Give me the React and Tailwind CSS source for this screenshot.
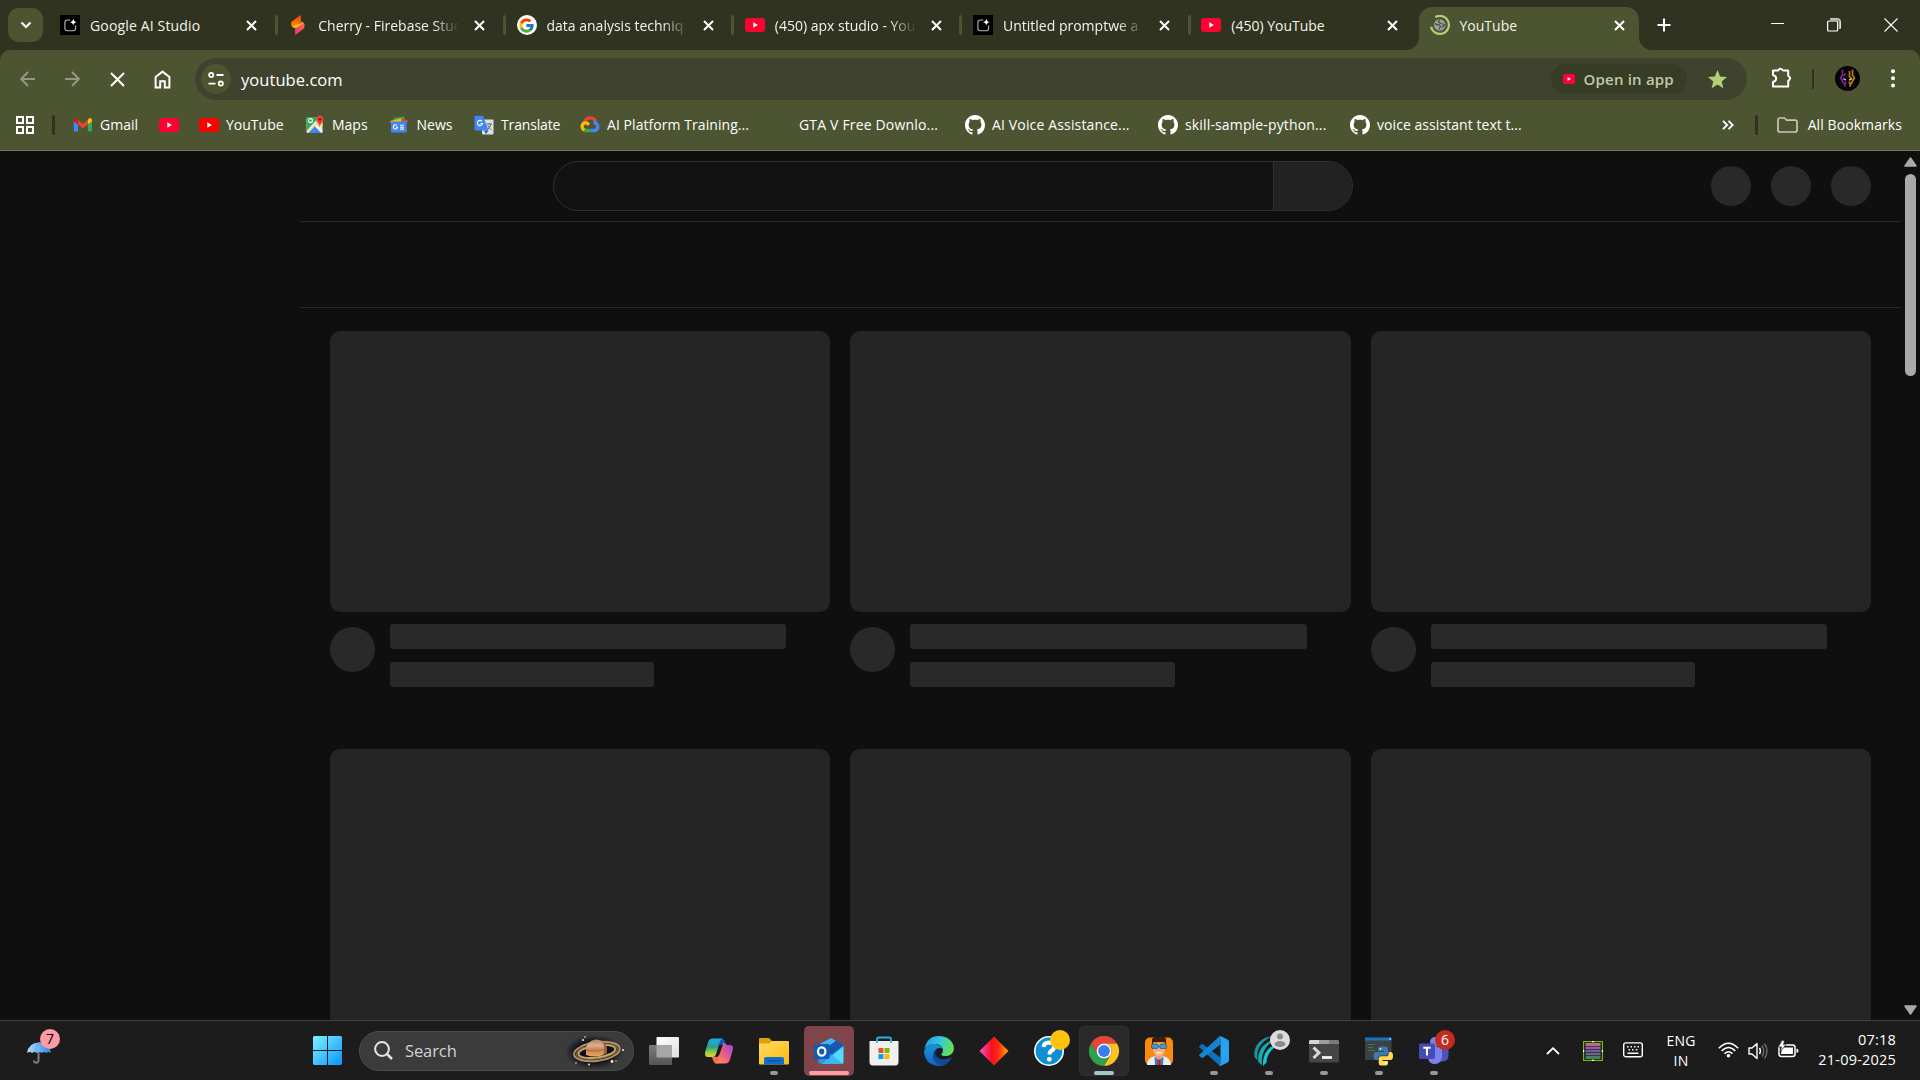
import React from "react";
import { FcGoogle } from "react-icons/fc";

const UI = "font-['Open_Sans','Noto_Sans',sans-serif]";

/* ---------- small icons ---------- */

const Cross = ({ s = 11, w = 2 }) => (
  <svg width={s} height={s} viewBox={`0 0 ${s} ${s}`} className="shrink-0">
    <path d={`M1 1L${s - 1} ${s - 1}M${s - 1} 1L1 ${s - 1}`} stroke="#fff" strokeWidth={w} />
  </svg>
);

const AiStudio = () => (
  <svg width="20" height="20" viewBox="0 0 20 20">
    <rect width="20" height="20" fill="#000" />
    <path d="M10.2 5H7.4Q4.9 5 4.9 7.500V13.300Q4.900 15.700 7.400 15.700H13.200Q15.600 15.700 15.600 13.300V10.600" fill="none" stroke="#b9b9b9" strokeWidth="1.100" />
    <path d="M13.300 3.800Q13.700 6.800 16.700 7.200Q13.700 7.600 13.300 10.600Q12.900 7.600 9.900 7.200Q12.900 6.800 13.300 3.800Z" fill="#fff" />
  </svg>
);

const FirebaseStudio = () => (
  <svg width="20" height="20" viewBox="0 0 20 20">
    <defs>
      <linearGradient id="fsA" x1="0" y1="0" x2="0" y2="1">
        <stop offset="0" stopColor="#ff3d00" />
        <stop offset="1" stopColor="#ff9100" />
      </linearGradient>
      <linearGradient id="fsB" x1="1" y1="0" x2="0" y2="1">
        <stop offset="0" stopColor="#ff7a2e" />
        <stop offset="1" stopColor="#e91ea0" />
      </linearGradient>
    </defs>
    <path d="M12.200 0.300L3.600 6.800Q2.200 9.600 4.600 12.200L12.800 7V1Q12.800 0.200 12.200 0.300Z" fill="url(#fsA)" />
    <path d="M4.600 12.200L14.200 6.600Q17.800 9 16 13.200L7.800 19.700Q7 20 7 19V13.800L10 11.600Z" fill="url(#fsB)" />
    <path d="M4.200 11.600L10.200 8.800L15 8.200L9 12.400Q6 13.800 4.200 11.600Z" fill="#ffc400" />
  </svg>
);

const GoogleG = () => (
  <span className="flex h-5 w-5 items-center justify-center rounded-full bg-white">
    <FcGoogle size={17} />
  </span>
);

const YouTube = ({ color = "#ff0033" }) => (
  <svg width="20" height="20" viewBox="0 0 20 20">
    <rect y="3" width="20" height="14" rx="3" fill={color} />
    <path d="M8.300 7.300L12.900 10L8.300 12.700Z" fill="#fff" />
  </svg>
);

const Loading = () => (
  <svg width="20" height="20" viewBox="0 0 20 20">
    <path d="M4.200 2.900A9 9 0 1 1 1.400 13" fill="none" stroke="#b5cf78" strokeWidth="2.200" transform="rotate(8 10 10)" />
    <circle cx="9.700" cy="10" r="5.800" fill="#9aa0a6" />
    <path d="M5 8.500Q7 10.500 9 9.500L10.500 11.500L9 14.500M9.500 4.500L8.500 7L11 8.500L14.500 9.500L12 12.500" fill="none" stroke="#4c5431" strokeWidth="1.300" />
  </svg>
);

const Gmail = () => (
  <svg width="20" height="20" viewBox="0 0 20 20">
    <path d="M0.800 6V15.500Q0.800 16.500 1.800 16.500H5V8.500Z" fill="#4285f4" />
    <path d="M14.800 8.500V16.500H18Q19 16.500 19 15.500V6Z" fill="#34a853" />
    <path d="M5 5L9.900 8.800L14.800 5V9.600L9.900 13.300L5 9.600Z" fill="#ea4335" />
    <path d="M0.800 5.200Q0.800 3 2.800 3Q3.500 3 5 4.500V9.600L0.800 6.500Z" fill="#c5221f" />
    <path d="M19 5.200Q19 3 17 3Q16.300 3 14.800 4.500V9.600L19 6.500Z" fill="#fbbc04" />
  </svg>
);

const Maps = () => (
  <svg width="20" height="20" viewBox="0 0 20 20">
    <rect x="1.500" y="2" width="16" height="16" rx="1.500" fill="#e8eaed" />
    <path d="M1.500 17V3.500Q1.500 2 3 2H14L1.500 16Z" fill="#34a853" />
    <path d="M2 17.800L13 6.500L17.500 9V11L10 10.500L3.500 18Z" fill="#fdd663" />
    <path d="M3.500 18L9.800 11.200L16.500 18Z" fill="#4285f4" />
    <path d="M11.500 10L17.500 16V17L16.500 18L10 11.500Z" fill="#f1f3f4" />
    <circle cx="5.500" cy="5.600" r="2" fill="none" stroke="#fff" strokeWidth="1.100" />
    <path d="M14.700 12.500Q14.500 9.500 12.500 7.500Q10.800 5.500 11.200 3.500Q12 .500 14.900 .500Q18 .700 18.500 3.800Q18.700 5.500 17 7.500Q15 9.500 14.700 12.500Z" fill="#ea4335" />
    <circle cx="14.900" cy="4.300" r="1.400" fill="#8e1b12" />
  </svg>
);

const News = () => (
  <svg width="20" height="20" viewBox="0 0 20 20">
    <path d="M4.500 3L15 1.600L16 6H4Z" fill="#34a853" />
    <path d="M1 6L12 3.500L13 8H2Z" fill="#fbbc04" />
    <path d="M13 4L19 5.500L17.500 9H12Z" fill="#ea4335" />
    <rect x="2" y="6.500" width="15.700" height="11" rx="1" fill="#4285f4" />
    <path d="M8 10.500A2.100 2.100 0 1 0 8.500 12.200H6.800M11 10.200H15M11 12.200H15M11 14.100H15" fill="none" stroke="#fff" strokeWidth="1.100" />
  </svg>
);

const Translate = () => (
  <svg width="20" height="20" viewBox="0 0 20 20">
    <rect x="8" y="4.500" width="11.500" height="15" rx="1" fill="#dcdfe3" />
    <path d="M1.500 .800H9L14.500 15.500H2Q.500 15.500 .500 14V2Q.500 .800 1.500 .800Z" fill="#4285f4" />
    <path d="M10 15.500H14.500L12 19Z" fill="#2a56c6" />
    <path d="M8 6.300A2.600 2.600 0 1 0 8.600 8.500H6.300" fill="none" stroke="#fff" strokeWidth="1.200" />
    <path d="M12.500 9H18M15.200 8V9M17 9Q16 13 13.500 14.500M13.800 10.500Q15 13 17.500 15" fill="none" stroke="#5f6368" strokeWidth="1" />
  </svg>
);

const Cloud = () => (
  <svg width="20" height="20" viewBox="0 0 20 20">
    <path d="M4.500 6.500Q6.500 2.600 10.500 2.800Q14.500 3 15.800 7" fill="none" stroke="#ea4335" strokeWidth="3.300" />
    <path d="M13.500 7.200Q17.800 8 17.800 12Q17.500 15.500 14 15.600H10.500" fill="none" stroke="#4285f4" strokeWidth="3.500" />
    <path d="M10.500 15.600H6Q4.500 15.600 3.500 14.900" fill="none" stroke="#34a853" strokeWidth="3.500" />
    <path d="M4.200 15.200Q1 12.500 2.600 9.500Q4.500 7 7.200 8.200L9 9.800" fill="none" stroke="#fbbc04" strokeWidth="3.300" />
  </svg>
);

const Github = () => (
  <svg width="20" height="20" viewBox="0 0 16 16" fill="#fff">
    <path d="M8 0C3.58 0 0 3.58 0 8c0 3.54 2.29 6.53 5.47 7.59.4.07.55-.17.55-.38 0-.19-.01-.82-.01-1.49-2.01.37-2.53-.49-2.69-.94-.09-.23-.48-.94-.82-1.13-.28-.15-.68-.52-.01-.53.63-.01 1.08.58 1.23.82.72 1.21 1.87.87 2.33.66.07-.52.28-.87.51-1.07-1.78-.2-3.64-.89-3.64-3.95 0-.87.31-1.59.82-2.15-.08-.2-.36-1.02.08-2.12 0 0 .67-.21 2.2.82.64-.18 1.32-.27 2-.27.68 0 1.36.09 2 .27 1.53-1.04 2.2-.82 2.2-.82.44 1.1.16 1.92.08 2.12.51.56.82 1.27.82 2.15 0 3.07-1.87 3.75-3.65 3.95.29.25.54.73.54 1.48 0 1.07-.01 1.93-.01 2.2 0 .21.15.46.55.38A8.013 8.013 0 0016 8c0-4.42-3.58-8-8-8z" />
  </svg>
);

/* ---------- browser chrome ---------- */

const tabs = [
  { icon: <AiStudio />, title: "Google AI Studio", t: "tracking-[0.15px]" },
  { icon: <FirebaseStudio />, title: "Cherry - Firebase Stud", fade: true },
  { icon: <GoogleG />, title: "data analysis techniq", fade: true },
  { icon: <YouTube />, title: "(450) apx studio - You", fade: true },
  { icon: <AiStudio />, title: "Untitled promptwe a", fade: true },
  { icon: <YouTube />, title: "(450) YouTube", last: true },
  { icon: <Loading />, title: "YouTube", active: true },
];

function Tab({ icon, title, fade, last, active, t = "" }) {
  return (
    <div className="relative flex h-[50px] w-[228.250px] shrink-0 items-center pl-3">
      {active && (
        <div className="absolute top-[7px] bottom-0 left-px w-[220px] rounded-t-[13px] bg-[#4c5431]">
          <svg className="absolute bottom-0 -left-[13px]" width="13" height="13"><path d="M13 0V13H0A13 13 0 0 0 13 0Z" fill="#4c5431" /></svg>
          <svg className="absolute -right-[13px] bottom-0" width="13" height="13"><path d="M0 0V13H13A13 13 0 0 1 0 0Z" fill="#4c5431" /></svg>
        </div>
      )}
      <span className="relative flex h-5 w-5 shrink-0">{icon}</span>
      <span
        className={
          "relative mt-px ml-[10px] w-[144px] shrink-0 text-[14px] leading-5 whitespace-nowrap text-[#f2f3ea] " + t +
          (fade ? " [mask-image:linear-gradient(to_right,#000_80%,transparent_98%)]" : "")
        }
      >
        {title}
      </span>
      <span className={"relative flex " + (active ? "ml-[10px]" : "ml-3")}><Cross s={11} w={2} /></span>
      {!active && !last && <span className="ml-[17.500px] h-5 w-[3px] shrink-0 rounded-full bg-[#4c5431]" />}
    </div>
  );
}

function TabStrip() {
  return (
    <div className="flex h-[50px] shrink-0 items-center bg-[#303320]">
      <div className="ml-2 flex h-[34px] w-[35px] shrink-0 items-center justify-center rounded-[11px] bg-[#4c5431]">
        <svg width="12" height="8" viewBox="0 0 12 8"><path d="M1.500 1.500L6 6L10.500 1.500" fill="none" stroke="#fff" strokeWidth="2.200" /></svg>
      </div>
      <div className="ml-[5px] flex shrink-0">
        {tabs.map((t, i) => <Tab key={i} {...t} />)}
      </div>
      <svg className="ml-[11px] shrink-0" width="14" height="14"><path d="M7 .500V13.500M.500 7H13.500" stroke="#fff" strokeWidth="2" /></svg>
      <div className="mr-[22px] ml-auto flex items-center gap-[43px]">
        <svg width="13" height="14"><path d="M0 5.500H13" stroke="#fff" /></svg>
        <svg width="14" height="14" fill="none">
          <path d="M3.500 1.700H10.500Q12.600 1.700 12.600 3.800V11" stroke="#a9ab9f" strokeWidth="1.600" />
          <rect x=".600" y="3" width="10" height="10" rx="1" stroke="#fff" strokeWidth="1.200" />
          <path d="M3 .700H11Q13.400 .700 13.400 3.500V10.500" stroke="#fff" strokeWidth=".900" />
        </svg>
        <svg width="14" height="14"><path d="M.500 .500L13.500 13.500M13.500 .500L.500 13.500" stroke="#fff" strokeWidth="1.100" /></svg>
      </div>
    </div>
  );
}

const Arrow = ({ flip }) => (
  <svg width="15" height="16" viewBox="0 0 15 16" className={flip ? "rotate-180" : ""}>
    <path d="M15 8H1.500M8 1L1.200 8L8 15" fill="none" stroke="#949882" strokeWidth="1.900" />
  </svg>
);

function Toolbar() {
  return (
    <div className="flex h-[58px] items-center pl-5">
      <Arrow />
      <span className="ml-[30px] flex"><Arrow flip /></span>
      <span className="ml-[30px] flex"><Cross s={15} w={2} /></span>
      <svg className="ml-[29px]" width="17" height="19" viewBox="0 0 17 19">
        <path d="M1.600 7L8.500 1.600L15.400 7V17.500H10.800V11.200H6.200V17.500H1.600Z" fill="none" stroke="#fff" strokeWidth="2" />
      </svg>
      <div className="ml-6 flex h-[42px] w-[1552px] shrink-0 items-center rounded-full bg-[#3f432e] pl-[6px]">
        <span className="flex h-[30px] w-[30px] items-center justify-center rounded-full bg-[#4c5431]">
          <svg width="16" height="15" viewBox="0 0 16 15" fill="none" stroke="#fff" strokeWidth="1.800">
            <circle cx="3.200" cy="3" r="2.100" /><path d="M8.500 3H15.500M.500 11.600H7.500" /><circle cx="12.800" cy="11.600" r="2.100" />
          </svg>
        </span>
        <span className="mt-px ml-[10px] text-[16.500px] leading-6 tracking-[0.050px] text-white">youtube.com</span>
        <span className="mr-[21px] ml-auto flex h-[30px] w-[136px] items-center rounded-full bg-[#363c25] pl-3">
          <svg width="12" height="10"><rect width="12" height="10" rx="2" fill="#ff0033" /><path d="M4.500 3L8 5L4.500 7Z" fill="#fff" /></svg>
          <span className="ml-[8.500px] text-[15px] font-semibold tracking-[0.200px] whitespace-nowrap text-[#c3c8a9]">Open in app</span>
        </span>
        <svg width="19" height="19" viewBox="0 0 19 19" className="mr-5">
          <path d="M9.500 0L12.100 6.400L19 6.900L13.700 11.400L15.400 18.200L9.500 14.500L3.600 18.200L5.300 11.400L0 6.900L6.900 6.400Z" fill="#b5cf78" />
        </svg>
      </div>
      <svg className="-mt-[2px] ml-6" width="21" height="22" viewBox="0 0 21 22">
        <path d="M2 3.600H6.500Q7 3.600 7.500 3Q9.500 .500 11.500 3Q12 3.600 12.500 3.600H17.200V8.500Q17.200 9 18 9.500Q20.300 11.300 18 13.200Q17.200 13.600 17.200 14.300V19.600H2V15Q5.200 13.800 5.200 11.400Q5.200 9 2 8Z" fill="none" stroke="#fff" strokeWidth="2" strokeLinejoin="round" />
      </svg>
      <span className="ml-5 h-5 w-[2px] rounded-full bg-[#303320]" />
      <svg className="-mt-px ml-[21px]" width="25" height="25" viewBox="0 0 25 25">
        <circle cx="12.500" cy="12.500" r="12.500" fill="#050305" />
        <path d="M7.500 3.500V9L5.500 12L8 16L10.500 20.500M10.500 7L8.500 10.500M7.500 13L11 14M10.500 15.500V18" fill="none" stroke="#7b2a96" strokeWidth="1.500" />
        <path d="M17.500 3.500V9L19.500 12L17 16L14.500 20.500M14.500 5V11L16.500 12M17.500 13L14 14M14.500 15.500V18" fill="none" stroke="#b47d16" strokeWidth="1.700" />
        <path d="M8.500 12.500L11 14M16.500 12.500L14 14" stroke="#f0e8f0" />
      </svg>
      <svg className="-mt-px ml-[30.500px]" width="4" height="19"><g fill="#fff"><circle cx="2" cy="2.200" r="2" /><circle cx="2" cy="9.300" r="2" /><circle cx="2" cy="16.400" r="2" /></g></svg>
    </div>
  );
}

const Bookmark = ({ icon, label, w, t = "" }) => (
  <div className={"flex shrink-0 items-center " + w}>
    <span className="flex h-5 w-5 shrink-0">{icon}</span>
    <span className={"ml-[7.500px] text-[14px] leading-5 whitespace-nowrap text-white " + t}>{label}</span>
  </div>
);

function BookmarksBar() {
  return (
    <div className="flex h-[34px] items-center pl-[15.500px]">
      <svg width="18" height="18" fill="none" stroke="#fff" strokeWidth="2"><path d="M1 1H7V7H1ZM11 1H17V7H11ZM1 11H7V17H1ZM11 11H17V17H11Z" /></svg>
      <span className="mr-[18px] ml-[18px] h-5 w-[3px] rounded-full bg-[#303320]" />
      <Bookmark w="w-[86px]" icon={<Gmail />} label="Gmail" />
      <Bookmark w="w-10" icon={<YouTube />} label="" />
      <Bookmark w="w-[106px]" icon={<YouTube color="#ff0000" />} label="YouTube" />
      <Bookmark w="w-[84.500px]" icon={<Maps />} label="Maps" />
      <Bookmark w="w-[84.500px]" icon={<News />} label="News" />
      <Bookmark w="w-[106px]" icon={<Translate />} label="Translate" t="tracking-[-0.150px]" />
      <Bookmark w="w-[192px]" icon={<Cloud />} label="AI Platform Training..." t="tracking-[0.060px]" />
      <Bookmark w="w-[193px]" label="GTA V Free Downlo..." t="tracking-[0.170px]" />
      <Bookmark w="w-[193px]" icon={<Github />} label="AI Voice Assistance..." t="tracking-[0.150px]" />
      <Bookmark w="w-[192px]" icon={<Github />} label="skill-sample-python..." t="tracking-[0.150px]" />
      <Bookmark w="w-[200px]" icon={<Github />} label="voice assistant text t..." t="tracking-[0.060px]" />
      <svg className="ml-auto" width="12" height="10"><path d="M1 .800L5.200 5L1 9.200M6.500 .800L10.700 5L6.500 9.200" fill="none" stroke="#fff" strokeWidth="1.800" /></svg>
      <span className="ml-[21px] h-5 w-[3px] rounded-full bg-[#303320]" />
      <svg className="ml-[19px]" width="21" height="16"><path d="M1 3Q1 1 3 1H7.500L9.500 3.200H18Q20 3.200 20 5V13Q20 15 18 15H3Q1 15 1 13Z" fill="none" stroke="#c5c7ba" strokeWidth="1.700" /></svg>
      <span className="-mt-px mr-[18px] ml-[10px] text-[14px] tracking-[0.080px] whitespace-nowrap text-white">All Bookmarks</span>
    </div>
  );
}

/* ---------- page ---------- */

const VideoSkeleton = () => (
  <div className="flex h-[418px] shrink-0 flex-col">
    <div className="h-[281px] shrink-0 rounded-[10px] bg-[#252525]" />
    <div className="flex pt-3">
      <div className="mt-[3px] h-[45px] w-[45px] shrink-0 rounded-full bg-[#292929]" />
      <div className="ml-[15px] flex flex-1 flex-col gap-[13px]">
        <div className="h-[25px] w-[396.250px] rounded-[3px] bg-[#292929]" />
        <div className="h-[25px] w-[264.250px] rounded-[3px] bg-[#292929]" />
      </div>
    </div>
  </div>
);

function Page() {
  return (
    <div className="flex h-[869px] shrink-0 overflow-hidden bg-[#0f0f0f]">
      <div className="w-[300px] shrink-0" />
      <main className="flex w-[1601px] shrink-0 flex-col">
        <div className="flex h-[71px] shrink-0 items-center justify-between border-b border-[#272727] pr-[30px] pl-[253px]">
          <div className="-mt-px flex h-[50px] w-[800px] overflow-hidden rounded-full border border-[#303030] bg-[#121212]">
            <div className="ml-auto w-[79px] border-l border-[#303030] bg-[#222222]" />
          </div>
          <div className="-mt-px flex gap-5">
            <div className="h-10 w-10 rounded-full bg-[#292929]" />
            <div className="h-10 w-10 rounded-full bg-[#292929]" />
            <div className="h-10 w-10 rounded-full bg-[#292929]" />
          </div>
        </div>
        <div className="h-[86px] shrink-0 border-b border-[#272727]" />
        <div className="grid grid-cols-3 gap-x-5 pt-[23px] pr-[30px] pl-[30px]">
          {Array.from({ length: 6 }, (_, i) => <VideoSkeleton key={i} />)}
        </div>
      </main>
      <div className="flex flex-1 flex-col items-center pt-[6px] pr-px pb-[5px]">
        <svg width="13" height="10"><path d="M6.500 1L12 9H1Z" fill="#a9a9a9" stroke="#a9a9a9" strokeWidth="1.500" strokeLinejoin="round" /></svg>
        <div className="mt-[7px] h-[202px] w-[11px] rounded-full bg-[#a9a9a9]" />
        <svg className="mt-auto" width="13" height="10"><path d="M6.500 9L12 1H1Z" fill="#a9a9a9" stroke="#a9a9a9" strokeWidth="1.500" strokeLinejoin="round" /></svg>
      </div>
    </div>
  );
}

/* ---------- taskbar icons ---------- */

const Umbrella = () => (
  <svg width="26" height="24" viewBox="0 0 28 26">
    <defs><linearGradient id="umb"><stop stopColor="#b4dcff" /><stop offset="1" stopColor="#2386df" /></linearGradient></defs>
    <path d="M13.500 9V20Q13.500 23.500 11 23.500Q8.500 23.500 8.500 21" fill="none" stroke="#7c7c7c" strokeWidth="2.200" />
    <path d="M1 13Q2.500 2 14 1.500Q25.500 2 27 13Q24.500 11 22 13Q19.500 11 17 13Q14.500 11 11.500 13Q9 11 6.500 13Q4 11 1 13Z" fill="url(#umb)" />
    <path d="M14 1.500Q10 5 9.500 12M14 1.500Q18 5 19 12" stroke="#5aaef2" fill="none" />
  </svg>
);

const WindowsLogo = () => (
  <svg width="29" height="29">
    <defs><linearGradient id="win" x1="0" y1="0" x2="29" y2="29" gradientUnits="userSpaceOnUse"><stop stopColor="#7df3ff" /><stop offset="1" stopColor="#0894fb" /></linearGradient></defs>
    <path d="M1 0H14V14H0V1ZM15 0H28L29 1V14H15ZM0 15H14V29H1L0 28ZM15 15H29V28L28 29H15Z" fill="url(#win)" />
  </svg>
);

const Saturn = () => (
  <svg width="60" height="36" viewBox="0 0 60 36">
    <defs>
      <radialGradient id="space"><stop offset=".600" stopColor="#0c101d" /><stop offset="1" stopColor="#0c101d" stopOpacity="0" /></radialGradient>
      <linearGradient id="planet" x1="0" y1="0" x2="0" y2="1"><stop stopColor="#b5846a" /><stop offset=".350" stopColor="#dcae90" /><stop offset=".600" stopColor="#c98655" /><stop offset="1" stopColor="#e8a866" /></linearGradient>
    </defs>
    <ellipse cx="28" cy="19" rx="29" ry="17" fill="url(#space)" />
    <g transform="rotate(-8 31 19)" fill="none">
      <ellipse cx="31" cy="18.500" rx="23" ry="9.300" stroke="#b4925f" strokeWidth="2" />
      <ellipse cx="31" cy="18.500" rx="20.500" ry="7.300" stroke="#7c6140" strokeWidth="1.500" />
      <ellipse cx="31" cy="18.500" rx="18.500" ry="6" stroke="#cba76f" strokeWidth="1.800" />
    </g>
    <path d="M20 19V17A10.500 10 0 0 1 41 16V20Q31 26 20 22Z" fill="url(#planet)" />
    <path d="M36 8Q41 11 41 16V20L37 22.500Q40 15 36 8Z" fill="#7c482a" opacity=".700" />
    <path d="M20.500 17Q30 20 40.500 15.500" fill="none" stroke="#a9683c" strokeWidth=".900" />
    <g fill="#f4ead4"><circle cx="17" cy="7" r="1" /><circle cx="19" cy="4" r=".800" /><circle cx="46" cy="28.500" r="1.400" /><circle cx="57" cy="17" r="1" /><circle cx="23" cy="31.500" r="1" /><circle cx="10" cy="30" r=".800" /><circle cx="50" cy="28" r=".700" /></g>
  </svg>
);

const TaskView = () => (
  <svg width="30" height="30" viewBox="0 0 30 30">
    <defs><linearGradient id="tvw" x1="0" y1="0" x2="1" y2="1"><stop stopColor="#fff" /><stop offset="1" stopColor="#dedede" /></linearGradient><linearGradient id="tvg" x1="0" y1="0" x2="0" y2="1"><stop stopColor="#7b7b7b" /><stop offset="1" stopColor="#555" /></linearGradient></defs>
    <rect x="7.500" y="1" width="22.500" height="20.500" rx="1" fill="url(#tvw)" />
    <rect x="0" y="9" width="23" height="20" rx="1" fill="url(#tvg)" />
    <path d="M7.500 9H23V21.500H7.500Z" fill="#a6a6a6" />
  </svg>
);

const Copilot = () => (
  <svg width="30" height="30" viewBox="0 0 30 30">
    <defs>
      <linearGradient id="cpA" x1="0" y1="0" x2="0" y2="1"><stop stopColor="#14b2e8" /><stop offset=".450" stopColor="#2f9f8a" /><stop offset=".750" stopColor="#8fd04a" /><stop offset="1" stopColor="#f5d60a" /></linearGradient>
      <linearGradient id="cpB" x1="1" y1="0" x2="0" y2="1"><stop stopColor="#9a45e8" /><stop offset=".500" stopColor="#ef5a86" /><stop offset="1" stopColor="#ffa24d" /></linearGradient>
    </defs>
    <path d="M17 2.500Q20 2.500 21.200 6L22.300 9H18Q15 9 14 12L10.500 23L5 20Z" fill="#1c53c9" />
    <path d="M13 27.500Q10 27.500 9 24L7.700 20.500H12.500Q15 20.500 16 17L19.500 7L25 10Z" fill="#ee7346" />
    <path d="M8.500 2.500H19Q16.500 3 15.500 6.500L12 18Q11 21 7.500 21H4Q.200 21 1.200 16L4 6.500Q5.200 2.500 8.500 2.500Z" fill="url(#cpA)" />
    <path d="M21.500 27.500H11Q13.500 27 14.500 23.500L18 12Q19 9 22.500 9H26Q30 9 28.800 14L26 23.500Q24.800 27.500 21.500 27.500Z" fill="url(#cpB)" />
    <path d="M15.500 8.500L18.500 9Q16.800 10 16 13L13.500 21L11 20.800Q12.200 20 13 17Z" fill="#1c1c1c" />
  </svg>
);

const Explorer = () => (
  <svg width="30" height="30" viewBox="0 0 30 30">
    <defs><linearGradient id="fol" x1="0" y1="0" x2="1" y2="1"><stop stopColor="#ffdc61" /><stop offset="1" stopColor="#fdb912" /></linearGradient></defs>
    <path d="M0 3Q0 2 1 2H10L13 5V9H0Z" fill="#e2a007" />
    <path d="M0 7.500H10L13 5H29Q30 5 30 6V27.500Q30 28.500 29 28.500H1Q0 28.500 0 27.500Z" fill="url(#fol)" />
    <path d="M5 28.500V23Q5 21 7 21H23Q25 21 25 23V28.500Z" fill="#0f6fc6" /><path d="M9 24.800H21" stroke="#0a4f94" strokeWidth="1.200" />
  </svg>
);

const Outlook = () => (
  <svg width="30" height="30" viewBox="0 0 30 30">
    <path d="M4 9L17 2L29.500 9V26Q29.500 28 27.500 28H8Q4 28 4 24Z" fill="#1366c4" />
    <path d="M4 9L17 2L22 5L7 16Z" fill="#42b8f2" /><path d="M22 5L29.500 9L14 19L8 15Z" fill="#1a55ae" />
    <path d="M29.500 10V26Q29.500 28 27.500 28H8L17 20Z" fill="#54dafa" /><path d="M4 24L17 18L29 28H8Q4 28 4 24Z" fill="#33a9ef" opacity=".750" />
    <rect x="0" y="8" width="15.500" height="15" rx="1.200" fill="#0f5db8" />
    <ellipse cx="7.700" cy="15.500" rx="3.700" ry="4.200" fill="none" stroke="#fff" strokeWidth="2.200" />
  </svg>
);

const Store = () => (
  <svg width="30" height="30" viewBox="0 0 30 30">
    <path d="M8 7V3Q8 1.500 9.500 1.500H20.500Q22 1.500 22 3V7" fill="none" stroke="#27b3ea" strokeWidth="1.800" />
    <path d="M.500 5.500Q.500 5 1 5H29Q29.500 5 29.500 5.500V26Q29.500 29.500 26 29.500H4Q.500 29.500 .500 26Z" fill="#f0f0f0" />
    <path d="M8 5V7M22 5V7" stroke="#27b3ea" strokeWidth="1.800" />
    <path d="M9.500 12H14.500V17H9.500Z" fill="#f25022" /><path d="M15.500 12H20.500V17H15.500Z" fill="#7fba00" /><path d="M9.500 18H14.500V23H9.500Z" fill="#00a4ef" /><path d="M15.500 18H20.500V23H15.500Z" fill="#ffb900" />
  </svg>
);

const Edge = () => (
  <svg width="30" height="30" viewBox="0 0 30 30">
    <defs>
      <linearGradient id="edT" x1="0" y1=".200" x2="1" y2=".500"><stop stopColor="#229ddb" /><stop offset=".500" stopColor="#36c7dd" /><stop offset="1" stopColor="#66e04f" /></linearGradient>
      <linearGradient id="edB" x1="0" y1="0" x2="0" y2="1"><stop stopColor="#1a93dd" /><stop offset="1" stopColor="#0f65c4" /></linearGradient>
    </defs>
    <path d="M.500 13Q3 0 15 0Q24 0 28.500 7Q30.500 11 29.500 15Q27.500 20 21.500 20Q17 20 17.300 18Q19.500 16.500 18.800 13Q17 8 11 8Q4 8 .500 13Z" fill="url(#edT)" />
    <path d="M0 15.500Q2 8 10.500 8Q17 8.500 18.800 13.200Q15 10 11.500 14Q7 20 11 25Q14 29 20 29Q17.500 30.200 15 30Q1 29 0 15.500Z" fill="url(#edB)" />
    <path d="M12.500 13Q9.500 17 12.500 20.800Q18 26 27 21.500Q28.300 21.200 27.500 22.600Q24 28.500 18 29.700Q11 29 9.300 22Q8.500 16 12.500 13Z" fill="#114b96" />
  </svg>
);

const Diamond = () => (
  <svg width="30" height="30" viewBox="0 0 30 30">
    <defs><linearGradient id="dia"><stop stopColor="#ff4fd0" /><stop offset=".420" stopColor="#f5101c" /><stop offset=".650" stopColor="#ff2a12" /><stop offset="1" stopColor="#ffae0c" /></linearGradient></defs>
    <path d="M15 .500L29.500 15L15 29.500L.500 15Z" fill="url(#dia)" />
  </svg>
);

const Help = () => (
  <svg width="30" height="30" viewBox="0 0 30 30">
    <circle cx="15" cy="15" r="14.200" fill="#0e8fd6" stroke="#fff" strokeWidth="1.600" />
    <path d="M9.500 11Q10 6.500 15 6.500Q20.300 6.700 20 11Q19.800 13.500 17.300 14.800Q15.500 15.800 15.500 18.500" fill="none" stroke="#fff" strokeWidth="4" /><circle cx="15.300" cy="23.300" r="2.400" fill="#fff" />
  </svg>
);

const Chrome = () => (
  <svg width="30" height="30" viewBox="0 0 48 48">
    <path d="M3.200 12A24 24 0 0 1 44.800 12H24A12 12 0 0 0 13.600 30Z" fill="#e8453a" />
    <path d="M44.800 12A24 24 0 0 1 24 48L34.400 30A12 12 0 0 0 24 12Z" fill="#fcc31e" />
    <path d="M24 48A24 24 0 0 1 3.200 12L13.600 30A12 12 0 0 0 34.400 30Z" fill="#2da14c" />
    <circle cx="24" cy="24" r="12" fill="#fff" /><circle cx="24" cy="24" r="9.500" fill="#3b7ded" />
  </svg>
);

const Mascot = () => (
  <svg width="28" height="30" viewBox="0 0 28 30">
    <rect y="1.500" width="28" height="27.500" rx="5" fill="#f98a0c" />
    <path d="M2 29Q2 22 10 20H18Q26 22 26 29Z" fill="#e9eef5" />
    <path d="M10 17H18V20L14 24L10 20Z" fill="#e99a6b" />
    <path d="M8 7H20V14Q19 20 14 20.500Q9 20 8 14Z" fill="#f5b183" />
    <path d="M7 10V3Q9 -.500 14 .800Q20 -.500 21 3V10L19.500 6H8.500Z" fill="#3a1c12" />
    <rect x="6.500" y="8" width="6.800" height="4.600" rx="1.500" fill="#2f9de0" stroke="#3a4652" strokeWidth=".700" /><rect x="14.700" y="8" width="6.800" height="4.600" rx="1.500" fill="#2f9de0" stroke="#3a4652" strokeWidth=".700" />
    <path d="M11.500 16.800H16.500" stroke="#fff" strokeWidth="1.300" />
    <path d="M9.500 20.500L14 24L12.500 29H10Z" fill="#4d74b8" /><path d="M18.500 20.500L14 24L15.500 29H18Z" fill="#4d74b8" /><path d="M13 23.500H15L15.800 29H12.200Z" fill="#c4232c" />
  </svg>
);

const VSCode = () => (
  <svg width="30" height="30" viewBox="0 0 30 30">
    <path d="M.500 10L2.500 8.300Q3.200 7.800 4 8.300L21.500 21.500V29.500Q20.500 29.500 19.500 28.700L.500 11.500Q-.200 10.800 .500 10Z" fill="#0f6fb9" />
    <path d="M.500 20L2.500 21.700Q3.200 22.200 4 21.700L21.500 8.500V.500Q20.500 .500 19.500 1.300L.500 18.500Q-.200 19.200 .500 20Z" fill="#1884cf" />
    <path d="M20 29.500Q21.500 28.500 21.500 27V3Q21.500 1.500 20 .500Q21.200 0 22.500 .500L28.500 3.400Q30 4.200 30 5.800V24.200Q30 25.800 28.500 26.600L22.500 29.500Q21.200 30 20 29.500Z" fill="#28a2ee" />
  </svg>
);

const Apx = () => (
  <svg width="30" height="30" viewBox="0 0 30 30">
    <path d="M18 .500C7 1 -1 10 .500 21L3.500 24.500C1.500 13 8 5 18 .500Z" fill="#17969e" />
    <path d="M21 3.500C10 6 2.500 15 4.500 26L8 29.500C6.500 18 12 9 21 3.500Z" fill="#14aab3" />
    <path d="M26 8C15 9 8.500 17 9 30L12.500 26.500C12.500 19 18 12 26 8Z" fill="#1cc4cc" />
  </svg>
);

const Terminal = () => (
  <svg width="30" height="30" viewBox="0 0 30 30">
    <rect y="4" width="30" height="22.500" rx="1.500" fill="#454545" /><path d="M0 8V5.500Q0 4 1.500 4H10V8Z" fill="#d6d6d6" /><path d="M10 4H20V8H10Z" fill="#9e9e9e" /><path d="M20 4H28.500Q30 4 30 5.500V8H20Z" fill="#7b7b7b" />
    <path d="M4.500 11.500L10 16.800L4.500 22" fill="none" stroke="#d9d9d9" strokeWidth="3" /><path d="M13 21.500H23" stroke="#f2f2f2" strokeWidth="2.800" />
  </svg>
);

const Python = () => (
  <svg width="30" height="30" viewBox="0 0 30 30">
    <rect x="1" y="2" width="26.500" height="22" fill="#3b4246" /><rect x="1" y="1.500" width="26.500" height="3" fill="#1676bd" /><path d="M25 3H27" stroke="#d6eaff" strokeWidth="1" />
    <path d="M4 8.500H11M4 11.500H9M4 14.500H11" stroke="#3d7a3f" strokeWidth="1.200" />
    <path d="M19.500 10.500H16.500Q14 10.500 14 13V15H20V16H12Q9.500 16 9.500 20Q9.500 24 12 24H14V21.500Q14 19.500 16.500 19.500H21.500Q24 19.500 24 17V13Q24 10.500 21.500 10.500Z" fill="#3c79ad" />
    <path d="M18.500 29.500H21.500Q24 29.500 24 27V25H18.500V24H26.500Q29 24 29 20Q29 16 26.500 16H24.700V18Q24.700 20.300 22 20.300H17Q14.700 20.300 14.700 22.500V27Q14.700 29.500 17 29.500Z" fill="#ffd94f" />
    <circle cx="16.500" cy="12.800" r=".900" fill="#fff" /><circle cx="21.800" cy="27.200" r=".900" fill="#fff" />
  </svg>
);

const Teams = () => (
  <svg width="30" height="30" viewBox="0 0 30 30">
    <circle cx="16" cy="6" r="5" fill="#7b83eb" /><path d="M20 11H29.500V19Q29.500 25 24 25.500H20Z" fill="#4b53bc" />
    <path d="M9 11H23V20Q22.500 28 16 28Q10 28 9 22Z" fill="#7b83eb" />
    <rect x="0" y="7.500" width="16" height="15.500" rx="1.500" fill="#454db5" /><path d="M4.300 11.800H11.700M8 11.800V19.500" stroke="#fff" strokeWidth="2" />
  </svg>
);

const apps = [
  { icon: <TaskView /> },
  { icon: <Copilot /> },
  { icon: <Explorer />, open: true },
  { icon: <Outlook />, alert: true },
  { icon: <Store /> },
  { icon: <Edge /> },
  { icon: <Diamond /> },
  { icon: <Help />, badge: <span className="block h-5 w-5 rounded-full bg-[#ffc20e]" /> },
  { icon: <Chrome />, current: true },
  { icon: <Mascot /> },
  { icon: <VSCode />, open: true },
  {
    icon: <Apx />, open: true,
    badge: (
      <svg width="20" height="20" viewBox="0 0 20 20"><circle cx="10" cy="10" r="10" fill="#dcdcdc" /><circle cx="10" cy="6.500" r="3" fill="#8b8b8b" /><ellipse cx="10" cy="14" rx="5.500" ry="3" fill="#8b8b8b" /></svg>
    ),
  },
  { icon: <Terminal />, open: true },
  { icon: <Python />, open: true },
  { icon: <Teams />, open: true, badge: <span className="flex h-5 w-5 items-center justify-center rounded-full bg-[#c42b1c] text-[14px] leading-none text-white">6</span> },
];

function AppButton({ icon, open, alert, current, badge }) {
  return (
    <div className="flex w-[55px] shrink-0 justify-center">
      <div
        className={
          "relative flex h-[50px] w-[50px] items-center justify-center rounded-[5px] " +
          (alert ? "bg-[#80444b]" : current ? "border border-[#323232] bg-[#2a2a2a]" : "")
        }
      >
        {icon}
        {badge && <span className="absolute top-[4px] right-[4px]">{badge}</span>}
        {open && <span className="absolute bottom-[1px] h-1 w-2 rounded-full bg-[#989898]" />}
        {current && <span className="absolute bottom-0 h-1 w-5 rounded-full bg-[#a1c7cb]" />}
        {alert && <span className="absolute bottom-[1px] h-1 w-10 rounded-full bg-[#ff9ba3]" />}
      </div>
    </div>
  );
}

function Tray() {
  return (
    <div className="mr-6 ml-auto flex items-center text-[14px] leading-5 text-white">
      <svg width="14" height="8"><path d="M1 7L7 1.200L13 7" fill="none" stroke="#fff" strokeWidth="1.800" /></svg>
      <svg className="ml-[23px]" width="20" height="20">
        <defs><linearGradient id="gpu" x1="0" y1="0" x2="0" y2="1"><stop stopColor="#c4718a" /><stop offset=".500" stopColor="#77599c" /><stop offset="1" stopColor="#3c8a58" /></linearGradient></defs>
        <rect x=".600" y=".600" width="18.800" height="18.800" fill="#161616" stroke="#76b900" strokeWidth="1.200" />
        <rect x="2.500" y="2" width="15" height="16" fill="url(#gpu)" />
        <path d="M2 5.500H18M2 8.500H18M2 11.500H18M2 14.500H18" stroke="#252332" strokeWidth=".700" />
        <path d="M9 .600H11M9 19.400H11M.600 9V11M19.400 9V11" stroke="#fff" strokeWidth="1.200" />
      </svg>
      <svg className="-mt-px ml-5" width="20" height="16" fill="none" stroke="#fff" strokeWidth="1.400">
        <rect x=".700" y=".900" width="18.600" height="13.800" rx="2" /><path d="M4 4.700H5.500M7.500 4.700H9M11 4.700H12.500M14.500 4.700H16M5.500 7.800H7M9 7.800H10.500M12.800 7.800H14.300M4.500 11.300H15.500" strokeWidth="1.500" />
      </svg>
      <div className="ml-[23px] w-[30px] text-center tracking-[0.200px]">ENG<br />IN</div>
      <svg className="-mt-px ml-[22px]" width="21" height="16" fill="none" stroke="#fff" strokeWidth="1.500">
        <path d="M.800 6.300Q10.500 -3.800 20.200 6.300M3.700 9Q10.500 2 17.300 9M6.500 11.800Q10.500 7.800 14.500 11.800" /><circle cx="10.500" cy="13.700" r="1.800" fill="#fff" stroke="none" />
      </svg>
      <svg className="ml-[9px]" width="21" height="18" fill="none" stroke="#fff" strokeWidth="1.400">
        <path d="M1 6H4L9 1.500V16.500L4 12H1Z" strokeLinejoin="round" /><path d="M11.500 6Q13.500 9 11.500 12" /><path d="M14 3.500Q17.500 9 14 14.500M16.500 1.500Q21.500 9 16.500 16.500" stroke="#6b6b6b" />
      </svg>
      <svg className="-mt-[3px] ml-[9px]" width="21" height="19">
        <rect x="1" y="5" width="16" height="11.500" rx="2.500" fill="none" stroke="#fff" strokeWidth="1.500" /><path d="M4 7.500H15V14H3Z" fill="#fff" /><path d="M18.500 8.500Q20.500 9 20.500 10.700Q20.500 12.500 18.500 13Z" fill="#fff" />
        <path d="M4 0L.500 7H3.500L2 12L8 4.800H5.500L6.500 1Z" fill="#fff" stroke="#1c1c1c" strokeWidth=".700" />
      </svg>
      <div className="-mt-[2px] ml-[18px] w-[79px] text-right text-[14.500px] tracking-[0.200px] whitespace-nowrap">07:18<br />21-09-2025</div>
    </div>
  );
}

function Taskbar() {
  return (
    <div className="flex h-[60px] shrink-0 items-center border-t border-[#3f3f3f] bg-[#1c1c1c]">
      <div className="relative ml-[26px] flex w-[34px] pt-[5px]">
        <Umbrella />
        <span className="absolute -top-[7px] right-0 flex h-5 w-5 items-center justify-center rounded-full bg-[#ff99a4] text-[14px] leading-none text-black">7</span>
      </div>
      <span className="ml-[253px] flex"><WindowsLogo /></span>
      <div className="ml-[17px] flex h-10 w-[275px] shrink-0 items-center rounded-full border border-[#4d4d4d] bg-[#3b3b3b] pl-[14px]">
        <svg width="19" height="19" fill="none" stroke="#e6e6e6"><circle cx="8" cy="8" r="6.900" strokeWidth="2" /><path d="M13 13L18 18" strokeWidth="2.500" /></svg>
        <span className="mt-px ml-3 text-[16.500px] tracking-[-0.100px] text-[#d2d2d2]">Search</span>
        <span className="mr-[7px] ml-auto"><Saturn /></span>
      </div>
      <div className="ml-[2.500px] flex shrink-0">
        {apps.map((a, i) => <AppButton key={i} {...a} />)}
      </div>
      <Tray />
    </div>
  );
}

export default function App() {
  return (
    <div className={"flex h-[1080px] w-[1920px] flex-col overflow-hidden bg-[#0f0f0f] " + UI}>
      <TabStrip />
      <div className="shrink-0 bg-[#303320]">
        <div className="h-[101px] rounded-t-[10px] border-b border-[#70775a] bg-[#4c5431]">
          <Toolbar />
          <BookmarksBar />
        </div>
      </div>
      <Page />
      <Taskbar />
    </div>
  );
}
